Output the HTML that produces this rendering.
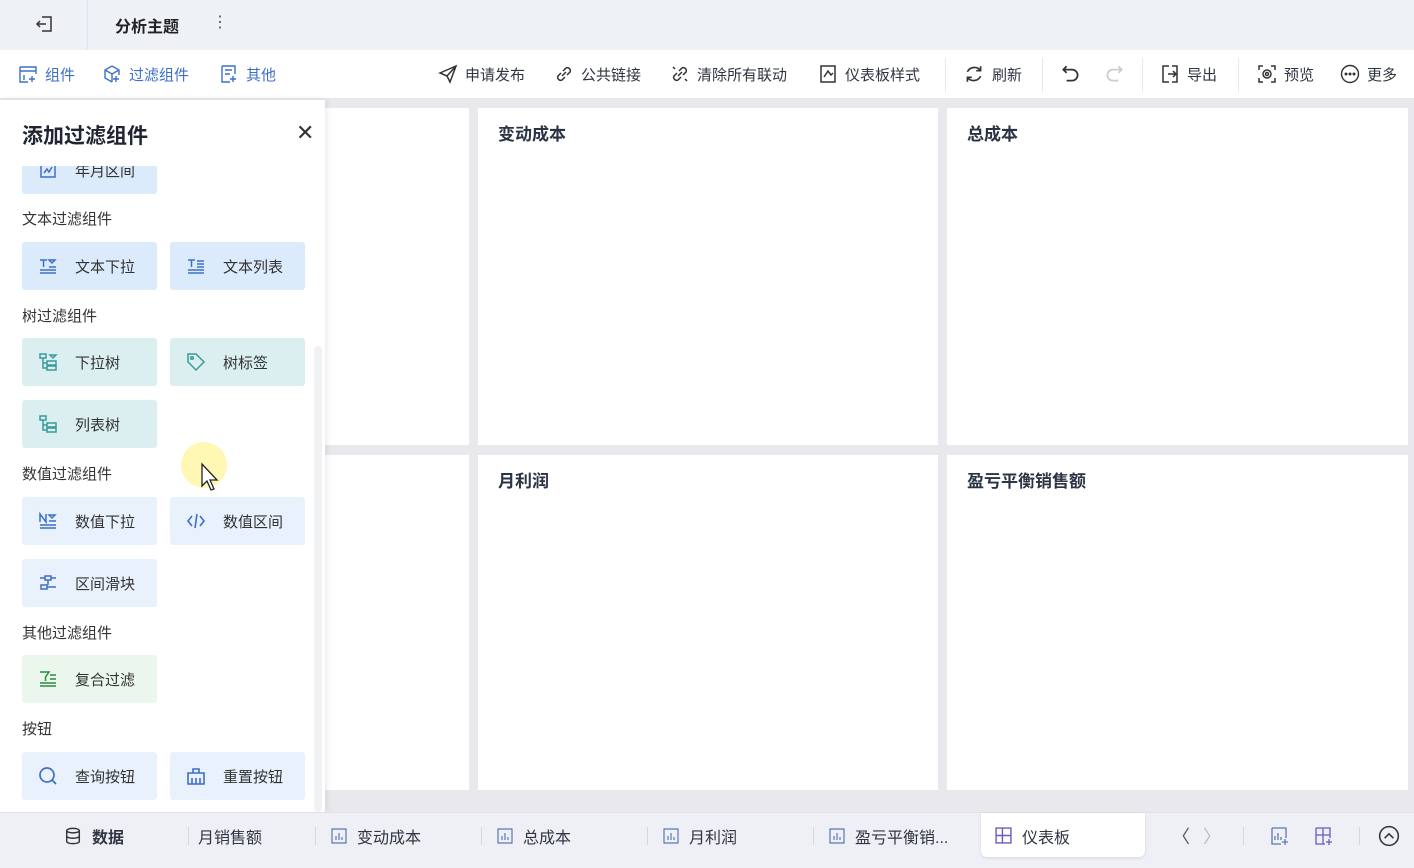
<!DOCTYPE html>
<html><head><meta charset="utf-8"><style>
*{margin:0;padding:0;box-sizing:border-box}
body{width:1414px;height:868px;overflow:hidden;position:relative;background:#e9e9ed;font-family:"Liberation Sans","Noto Sans CJK SC",sans-serif;color:#333}
.abs{position:absolute}
#top{left:0;top:0;width:1414px;height:50px;background:#eef1f6}
#tb{left:0;top:50px;width:1414px;height:49px;background:#fff;border-bottom:1px solid #e4e6ea}
.ti{position:absolute;top:0;height:48px;display:flex;align-items:center;font-size:15px;color:#2f3542;gap:7px}
.ti.b{color:#3d6fc9}
.sep{position:absolute;top:8px;width:1px;height:34px;background:#e6e8eb}
.card{position:absolute;background:#fff}
.ct{position:absolute;left:20px;top:12px;font-size:17px;font-weight:bold;color:#2b3444}
#panel{left:0;top:100px;width:325px;height:712px;background:#fff;box-shadow:2px 0 6px rgba(0,0,0,.08);overflow:hidden}
.lab{position:absolute;left:22px;font-size:15px;color:#333}
.btn{position:absolute;width:135px;height:48px;border-radius:3px;display:flex;align-items:center;font-size:15px;color:#333}
.btn svg{position:absolute;left:16px}
.btn span{position:absolute;left:53px}
.bl{background:#dcebfb}.tl{background:#dbeff0}.gr{background:#e8f1fc}.gn{background:#ebf7ec}
#bot{left:0;top:812px;width:1414px;height:56px;background:#eef0f5;border-top:1px solid #dfe1e6}
.bt{position:absolute;top:0;height:45px;display:flex;align-items:center;font-size:16px;color:#2f3542;gap:10px}
.bs{position:absolute;top:14px;width:1px;height:18px;background:#d4d7dc}
</style></head><body>
<div id="top" class="abs">
 <svg class="abs" style="left:34px;top:14px" width="20" height="20" viewBox="0 0 20 20" fill="none" stroke="#333" stroke-width="1.5"><path d="M8 3h9v14H8M12 10H3M6 7l-3 3 3 3"/></svg>
 <div class="abs" style="left:87px;top:0;width:1px;height:50px;background:#e1e4ea"></div>
 <div class="abs" style="left:115px;top:13px;font-size:16px;font-weight:bold;color:#222">分析主题</div>
 <div class="abs" style="left:212px;top:12px;font-size:16px;color:#555">⋮</div>
</div>
<div id="tb" class="abs">
 <div class="ti b" style="left:18px"><svg width="20" height="20" viewBox="0 0 20 20" fill="none" stroke="#3d6fc9" stroke-width="1.4"><path d="M2 3h16v7M2 3v15h8M2 7h16M6 11v5M14 12v6M11 15h6"/></svg>组件</div>
 <div class="ti b" style="left:102px"><svg width="20" height="20" viewBox="0 0 20 20" fill="none" stroke="#3d6fc9" stroke-width="1.4"><path d="M10 2l7 4v5M10 2L3 6v8l7 4M3 6l7 4 7-4M10 10v8M14 12v6M11 15h6"/></svg>过滤组件</div>
 <div class="ti b" style="left:219px"><svg width="20" height="20" viewBox="0 0 20 20" fill="none" stroke="#3d6fc9" stroke-width="1.4"><path d="M3 2h13v8M3 2v16h8M6 6h7M6 10h5M14 12v6M11 15h6"/></svg>其他</div>
 <div class="ti" style="left:438px"><svg width="20" height="20" viewBox="0 0 20 20" fill="none" stroke="#333" stroke-width="1.5"><path d="M2 9L18 2l-6 16-3-6z M9 12l9-10"/></svg>申请发布</div>
 <div class="ti" style="left:554px"><svg width="20" height="20" viewBox="0 0 20 20" fill="none" stroke="#333" stroke-width="1.5"><path d="M8 12l4-4M7 9l-3 3a3 3 0 004 4l3-3M13 11l3-3a3 3 0 00-4-4L9 7"/></svg>公共链接</div>
 <div class="ti" style="left:670px"><svg width="20" height="20" viewBox="0 0 20 20" fill="none" stroke="#333" stroke-width="1.5"><path d="M8 12l4-4M7 9l-3 3a3 3 0 004 4l3-3M13 11l3-3a3 3 0 00-4-4L9 7M3 3l2 2M15 15l2 2"/></svg>清除所有联动</div>
 <div class="ti" style="left:818px"><svg width="20" height="20" viewBox="0 0 20 20" fill="none" stroke="#333" stroke-width="1.5"><path d="M3 2h14v16H3zM6 13l4-6 3 4 2-2"/></svg>仪表板样式</div>
 <div class="sep" style="left:945px"></div>
 <div class="ti" style="left:963px"><svg width="22" height="22" viewBox="0 0 20 20" fill="none" stroke="#333" stroke-width="1.5"><path d="M16 7a7 7 0 00-12 1M4 13a7 7 0 0012-1M16 3v4h-4M4 17v-4h4"/></svg>刷新</div>
 <div class="sep" style="left:1042px"></div>
 <div class="ti" style="left:1060px"><svg width="22" height="22" viewBox="0 0 20 20" fill="none" stroke="#333" stroke-width="1.6"><path d="M6 3L3 6l3 3M3 6h8a5 5 0 010 10H6"/></svg></div>
 <div class="ti" style="left:1103px"><svg width="22" height="22" viewBox="0 0 20 20" fill="none" stroke="#ccc" stroke-width="1.6"><path d="M14 3l3 3-3 3M17 6H9a5 5 0 000 10h5"/></svg></div>
 <div class="sep" style="left:1142px"></div>
 <div class="ti" style="left:1160px"><svg width="20" height="20" viewBox="0 0 20 20" fill="none" stroke="#333" stroke-width="1.5"><path d="M9 2H3v16h6M12 2h5v16h-5M8 10h7M13 7l3 3-3 3"/></svg>导出</div>
 <div class="sep" style="left:1238px"></div>
 <div class="ti" style="left:1257px"><svg width="20" height="20" viewBox="0 0 20 20" fill="none" stroke="#333" stroke-width="1.5"><path d="M2 6V2h4M14 2h4v4M18 14v4h-4M6 18H2v-4"/><circle cx="10" cy="10" r="4"/><circle cx="10" cy="10" r="1.5"/></svg>预览</div>
 <div class="ti" style="left:1340px"><svg width="20" height="20" viewBox="0 0 20 20" fill="none" stroke="#333" stroke-width="1.4"><circle cx="10" cy="10" r="8.5"/><circle cx="6" cy="10" r=".8" fill="#333"/><circle cx="10" cy="10" r=".8" fill="#333"/><circle cx="14" cy="10" r=".8" fill="#333"/></svg>更多</div>
</div>

<div class="card" style="left:300px;top:108px;width:169px;height:337px"></div>
<div class="card" style="left:478px;top:108px;width:460px;height:337px"><div class="ct">变动成本</div></div>
<div class="card" style="left:947px;top:108px;width:461px;height:337px"><div class="ct">总成本</div></div>
<div class="card" style="left:300px;top:455px;width:169px;height:335px"></div>
<div class="card" style="left:478px;top:455px;width:460px;height:335px"><div class="ct">月利润</div></div>
<div class="card" style="left:947px;top:455px;width:461px;height:335px"><div class="ct">盈亏平衡销售额</div></div>

<div id="panel" class="abs">
 <div class="btn bl" style="left:22px;top:46px"><svg width="20" height="20" viewBox="0 0 20 20" fill="none" stroke="#3d6fc9" stroke-width="1.5"><path d="M3 3h14v14H3zM6 13l3-4 2 3 3-5"/></svg><span>年月区间</span></div>
 <div class="abs" style="left:0;top:0;width:325px;height:66px;background:#fff"></div>
 <div class="abs" style="left:22px;top:20px;font-size:21px;font-weight:bold;color:#1f2633">添加过滤组件</div>
 <div class="abs" style="left:296px;top:22px;font-size:22px;color:#333;line-height:22px">✕</div>
 <div class="lab" style="top:108px">文本过滤组件</div>
 <div class="btn bl" style="left:22px;top:142px"><svg width="20" height="20" viewBox="0 0 20 20" fill="none" stroke="#3d6fc9" stroke-width="1.5"><path d="M2 4h7M5.5 4v7M11 4h6l-3 3zM2 14h16M2 17h16M11 11h7"/></svg><span>文本下拉</span></div>
 <div class="btn bl" style="left:170px;top:142px"><svg width="20" height="20" viewBox="0 0 20 20" fill="none" stroke="#3d6fc9" stroke-width="1.5"><path d="M2 4h7M5.5 4v7M11 5h7M11 8h7M11 11h7M2 14h16M2 17h16"/></svg><span>文本列表</span></div>
 <div class="lab" style="top:205px">树过滤组件</div>
 <div class="btn tl" style="left:22px;top:238px"><svg width="20" height="20" viewBox="0 0 20 20" fill="none" stroke="#3a9a9a" stroke-width="1.5"><path d="M2 2h6v4H2zM9 9h9v4H9zM9 14h9v4H9zM5 6v10h4M5 11h4M12 3h6l-3 3z"/></svg><span>下拉树</span></div>
 <div class="btn tl" style="left:170px;top:238px"><svg width="20" height="20" viewBox="0 0 20 20" fill="none" stroke="#3a9a9a" stroke-width="1.5"><path d="M2 2h8l8 8-8 8-8-8z"/><circle cx="6" cy="6" r="1.3"/></svg><span>树标签</span></div>
 <div class="btn tl" style="left:22px;top:300px"><svg width="20" height="20" viewBox="0 0 20 20" fill="none" stroke="#3a9a9a" stroke-width="1.5"><path d="M2 2h6v4H2zM9 9h9v4H9zM9 14h9v4H9zM5 6v10h4M5 11h4"/></svg><span>列表树</span></div>
 <div class="lab" style="top:363px">数值过滤组件</div>
 <div class="btn gr" style="left:22px;top:397px"><svg width="20" height="20" viewBox="0 0 20 20" fill="none" stroke="#3d6fc9" stroke-width="1.5"><path d="M2 11V3l6 8V3M11 4h6l-3 3zM2 14h16M2 17h16M11 10h7"/></svg><span>数值下拉</span></div>
 <div class="btn gr" style="left:170px;top:397px"><svg width="20" height="20" viewBox="0 0 20 20" fill="none" stroke="#3d6fc9" stroke-width="1.6"><path d="M6 5l-4 5 4 5M14 5l4 5-4 5M11 3L9 17"/></svg><span>数值区间</span></div>
 <div class="btn gr" style="left:22px;top:459px"><svg width="20" height="20" viewBox="0 0 20 20" fill="none" stroke="#3d6fc9" stroke-width="1.5"><path d="M7 3h6v4H7zM3 12h6v4H3zM2 5h5M13 5h5M9 14h9M10 7v5"/></svg><span>区间滑块</span></div>
 <div class="lab" style="top:522px">其他过滤组件</div>
 <div class="btn gn" style="left:22px;top:555px"><svg width="20" height="20" viewBox="0 0 20 20" fill="none" stroke="#2e8b3e" stroke-width="1.5"><path d="M2 3h9L7.5 8v4M12 6h6M12 10h6M2 14h16M2 17h16"/></svg><span>复合过滤</span></div>
 <div class="lab" style="top:618px">按钮</div>
 <div class="btn gr" style="left:22px;top:652px"><svg width="20" height="20" viewBox="0 0 20 20" fill="none" stroke="#3d6fc9" stroke-width="1.7"><circle cx="9" cy="9" r="7"/><path d="M14 14l4 4"/></svg><span>查询按钮</span></div>
 <div class="btn gr" style="left:170px;top:652px"><svg width="20" height="20" viewBox="0 0 20 20" fill="none" stroke="#3d6fc9" stroke-width="1.6"><path d="M7 3h6v4H7zM2 7h16v11H2zM6 12v6M10 12v6M14 12v6"/></svg><span>重置按钮</span></div>
 <div class="abs" style="left:314px;top:246px;width:8px;height:466px;background:#f0f1f3;border-radius:4px"></div>
</div>
<div class="abs" style="left:181px;top:442px;width:46px;height:46px;border-radius:50%;background:rgba(255,245,150,.7)"></div>
<svg class="abs" style="left:200px;top:462px" width="22" height="30" viewBox="0 0 22 30"><path d="M2 2v22l5-5 4 9 3-1-4-9h7z" fill="#fff" stroke="#222" stroke-width="1.3"/></svg>

<div id="bot" class="abs">
 <div class="bt" style="left:64px"><svg width="18" height="18" viewBox="0 0 20 20" fill="none" stroke="#333" stroke-width="1.6"><ellipse cx="10" cy="4" rx="7" ry="2.5"/><path d="M3 4v12c0 1.4 3 2.5 7 2.5s7-1.1 7-2.5V4M3 10c0 1.4 3 2.5 7 2.5s7-1.1 7-2.5"/></svg><b style="font-weight:bold">数据</b></div>
 <div class="bs" style="left:188px"></div>
 <div class="bt" style="left:198px">月销售额</div>
 <div class="bs" style="left:315px"></div>
 <div class="bt" style="left:331px"><svg width="16" height="16" viewBox="0 0 16 16" fill="none" stroke="#5a7ab5" stroke-width="1.2"><path d="M1 1h14v14H1zM5 12V8M8 12V5M11 12V9"/></svg>变动成本</div>
 <div class="bs" style="left:481px"></div>
 <div class="bt" style="left:497px"><svg width="16" height="16" viewBox="0 0 16 16" fill="none" stroke="#5a7ab5" stroke-width="1.2"><path d="M1 1h14v14H1zM5 12V8M8 12V5M11 12V9"/></svg>总成本</div>
 <div class="bs" style="left:647px"></div>
 <div class="bt" style="left:663px"><svg width="16" height="16" viewBox="0 0 16 16" fill="none" stroke="#5a7ab5" stroke-width="1.2"><path d="M1 1h14v14H1zM5 12V8M8 12V5M11 12V9"/></svg>月利润</div>
 <div class="bs" style="left:813px"></div>
 <div class="bt" style="left:829px"><svg width="16" height="16" viewBox="0 0 16 16" fill="none" stroke="#5a7ab5" stroke-width="1.2"><path d="M1 1h14v14H1zM5 12V8M8 12V5M11 12V9"/></svg>盈亏平衡销...</div>
 <div class="abs" style="left:981px;top:0;width:164px;height:44px;background:#fff;border-radius:0 0 6px 6px;box-shadow:0 1px 3px rgba(0,0,0,.1)"></div>
 <div class="bt" style="left:995px"><svg width="17" height="17" viewBox="0 0 16 16" fill="none" stroke="#6a5ac0" stroke-width="1.3"><path d="M1 1h14v14H1zM1 8h14M7 1v14"/></svg>仪表板</div>
 <div class="bt" style="left:1172px;color:#555;font-size:18px">〈</div>
 <div class="bt" style="left:1203px;color:#bbb;font-size:18px">〉</div>
 <div class="bs" style="left:1243px"></div>
 <div class="bt" style="left:1270px"><svg width="20" height="20" viewBox="0 0 20 20" fill="none" stroke="#5a7ab5" stroke-width="1.3"><path d="M2 2h14v10M2 2v16h9M5 14V10M8 14V7M11 14v-3M15 13v6M12 16h6" /></svg></div>
 <div class="bt" style="left:1314px"><svg width="20" height="20" viewBox="0 0 20 20" fill="none" stroke="#6a5ac0" stroke-width="1.3"><path d="M2 2h14v10M2 2v16h9M2 9h14M9 2v16M15 13v6M12 16h6"/></svg></div>
 <div class="bs" style="left:1359px"></div>
 <div class="bt" style="left:1378px"><svg width="22" height="22" viewBox="0 0 20 20" fill="none" stroke="#333" stroke-width="1.4"><circle cx="10" cy="10" r="8.5"/><path d="M6 12l4-4 4 4"/></svg></div>
</div>
</body></html>
